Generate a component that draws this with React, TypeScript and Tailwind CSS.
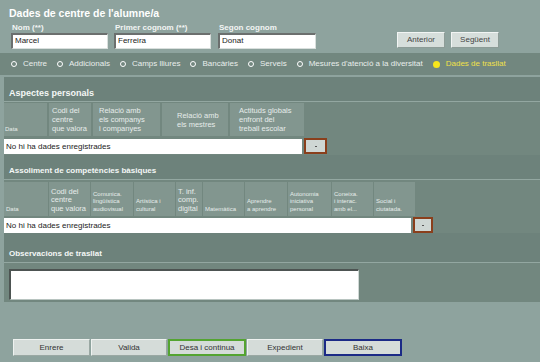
import { Fragment } from 'react'

const font = { fontFamily: '"Liberation Sans", Arial, sans-serif' }

const tabs = [
  'Centre',
  'Addicionals',
  'Camps lliures',
  'Bancàries',
  'Serveis',
  "Mesures d'atenció a la diversitat",
]

const cols1 = [
  { w: 'w-[43px]', t: ['Data'] },
  { w: 'w-[42px]', t: ['Codi del', 'centre', 'que valora'] },
  { w: 'w-[67px]', t: ['Relació amb', 'els companys', 'i companyes'], p: 'pl-[6px]' },
  { w: 'w-[66px]', t: ['Relació amb', 'els mestres'], p: 'pl-[15px]' },
  { w: 'w-[74px]', t: ['Actituds globals', 'enfront del', 'treball escolar'], p: 'pl-[9px]' },
]

const cols2 = [
  { w: 'w-[44px]', t: ['Data'] },
  { w: 'w-[41px]', t: ['Codi del', 'centre', 'que valora'], big: true },
  { w: 'w-[42px]', t: ['Comunica.', 'lingüística', 'audiovisual'] },
  { w: 'w-[41px]', t: ['Artística i', 'cultural'] },
  { w: 'w-[26px]', t: ['T. inf.', 'comp.', 'digital'], big: true },
  { w: 'w-[41px]', t: ['Matemàtica'] },
  { w: 'w-[42px]', t: ['Aprendre', 'a aprendre'] },
  { w: 'w-[43px]', t: ['Autonomia', 'iniciativa', 'personal'] },
  { w: 'w-[41px]', t: ['Coneixa.', 'i interac.', 'amb el...'] },
  { w: 'w-[41px]', t: ['Social i', 'ciutatada.'] },
]

const Lines = ({ t }: { t: string[] }) => (
  <span>
    {t.map((l, i) => (
      <Fragment key={i}>
        {i > 0 && <br />}
        {l}
      </Fragment>
    ))}
  </span>
)

const Field = ({ label, value, w }: { label: string; value: string; w: string }) => (
  <div className="flex flex-col">
    <span className="text-[8px] font-bold text-[#f2f5f4] leading-[9px] pl-[1px] mb-[1px]">{label}</span>
    <div
      className={`${w} h-[16px] bg-white border-t-2 border-l-2 border-t-[#6b6f6e] border-l-[#6b6f6e] border-b border-r border-b-[#d9dfdd] border-r-[#d9dfdd] text-[8px] text-[#222] pl-[2px] leading-[12px]`}
    >
      {value}
    </div>
  </div>
)

const PlusBtn = ({ w }: { w: string }) => (
  <div className={`${w} h-[16px] shrink-0 border-2 border-[#8a3f1c] bg-[#cfd7d4] flex items-center justify-center`}>
    <span className="block w-[2px] h-[1px] bg-[#555]" />
  </div>
)

const SectionHead = ({ title, h, small }: { title: string; h: string; small?: boolean }) => (
  <div className={`${h} shrink-0 flex items-end border-b border-[#93a7a1] bg-[#6d827b] pl-[5px] pb-[3px]`}>
    <span className={`${small ? 'text-[8px]' : 'text-[9px]'} font-bold text-[#f4f7f6] leading-[10px]`}>{title}</span>
  </div>
)

const BottomBtn = ({ t, b }: { t: string; b?: string }) => (
  <div
    className={`h-[17px] flex items-center justify-center bg-[#d5dcd9] text-[8px] text-[#333] ${
      b ? `border-2 ${b}` : 'border border-t-[#eef2f0] border-l-[#eef2f0] border-b-[#9aa8a3] border-r-[#9aa8a3]'
    }`}
  >
    {t}
  </div>
)

export default function App() {
  return (
    <div className="w-[540px] h-[362px] bg-[#8ea39e] overflow-hidden flex flex-col" style={font}>
      <div className="px-[9px] pt-[7px] shrink-0">
        <div className="text-[10.5px] font-bold text-white leading-[13px]">Dades de centre de l'alumne/a</div>
        <div className="flex items-end mt-[3px] pl-[2px]">
          <Field label="Nom (**)" value="Marcel" w="w-[97px]" />
          <div className="w-[6px]" />
          <Field label="Primer cognom (**)" value="Ferreira" w="w-[97px]" />
          <div className="w-[7px]" />
          <Field label="Segon cognom" value="Donat" w="w-[98px]" />
          <div className="w-[81px]" />
          <div className="flex gap-[6px] mb-[1px]">
            <div className="w-[48px] h-[16px] bg-[#d6dedb] border border-t-[#f2f5f4] border-l-[#f2f5f4] border-b-[#8d9c97] border-r-[#8d9c97] text-[8px] text-[#444] flex items-center justify-center">
              Anterior
            </div>
            <div className="w-[48px] h-[16px] bg-[#d6dedb] border border-t-[#f2f5f4] border-l-[#f2f5f4] border-b-[#8d9c97] border-r-[#8d9c97] text-[8px] text-[#444] flex items-center justify-center">
              Següent
            </div>
          </div>
        </div>
      </div>

      <div className="mt-[4px] h-[22px] shrink-0 bg-[#72877f] flex items-center pl-[11px] text-[8px] text-[#e9eeec]">
        {tabs.map((t) => (
          <div key={t} className="flex items-center mr-[10px]">
            <span className="w-[6px] h-[6px] rounded-full border border-white mr-[6px]" />
            <span>{t}</span>
          </div>
        ))}
        <div className="flex items-center text-[#f0e04a]">
          <span className="w-[7px] h-[7px] rounded-full bg-[#f7e61c] mr-[6px]" />
          <span>Dades de trasllat</span>
        </div>
      </div>

      <div className="mt-[2px] ml-[4px] h-[225px] shrink-0 bg-[#72877f] flex flex-col">
        <SectionHead title="Aspectes personals" h="h-[25px]" />
        <div className="flex gap-[2px] mt-[1px] shrink-0">
          {cols1.map((c, i) => (
            <div
              key={i}
              className={`${c.w} h-[33px] bg-[#82968f] text-[#e6ecea] flex ${
                i === 0 ? 'items-end text-[6px] pb-[2px] pl-[1px]' : `items-center text-[7.5px] leading-[9px] ${c.p ?? 'pl-[3px]'}`
              }`}
            >
              <Lines t={c.t} />
            </div>
          ))}
        </div>
        <div className="flex items-center gap-[2px] mt-[2px] shrink-0">
          <div className="w-[298px] h-[15px] bg-white text-[8px] text-[#222] pl-[2px] leading-[15px]">
            No hi ha dades enregistrades
          </div>
          <PlusBtn w="w-[23px]" />
        </div>

        <div className="mt-[1px]">
          <SectionHead title="Assoliment de competències bàsiques" h="h-[25px]" small />
        </div>
        <div className="flex gap-[1px] mt-[2px] shrink-0">
          {cols2.map((c, i) => (
            <div
              key={i}
              className={`${c.w} h-[34px] bg-[#82968f] text-[#e6ecea] flex items-end pb-[3px] pl-[2px] ${
                c.big ? 'text-[7.5px] leading-[8.5px]' : 'text-[6px] leading-[7.5px]'
              }`}
            >
              <Lines t={c.t} />
            </div>
          ))}
        </div>
        <div className="flex items-center gap-[2px] mt-[1px] shrink-0">
          <div className="w-[407px] h-[15px] bg-white text-[8px] text-[#222] pl-[2px] leading-[15px]">
            No hi ha dades enregistrades
          </div>
          <PlusBtn w="w-[20px]" />
        </div>

        <SectionHead title="Observacions de trasllat" h="h-[30px]" small />
        <div className="mt-[6px] ml-[5px] w-[350px] h-[31px] shrink-0 bg-white border-t-2 border-l-2 border-t-[#4d5452] border-l-[#4d5452] border-b border-r border-b-[#b8c4c0] border-r-[#d0d8d5]" />
      </div>

      <div className="mt-[37px] ml-[13px] grid grid-cols-[77px_76px_78px_76px_78px] gap-[1px]">
        <BottomBtn t="Enrere" />
        <BottomBtn t="Valida" />
        <BottomBtn t="Desa i continua" b="border-[#54a431]" />
        <BottomBtn t="Expedient" />
        <BottomBtn t="Baixa" b="border-[#1b2a86]" />
      </div>
    </div>
  )
}
